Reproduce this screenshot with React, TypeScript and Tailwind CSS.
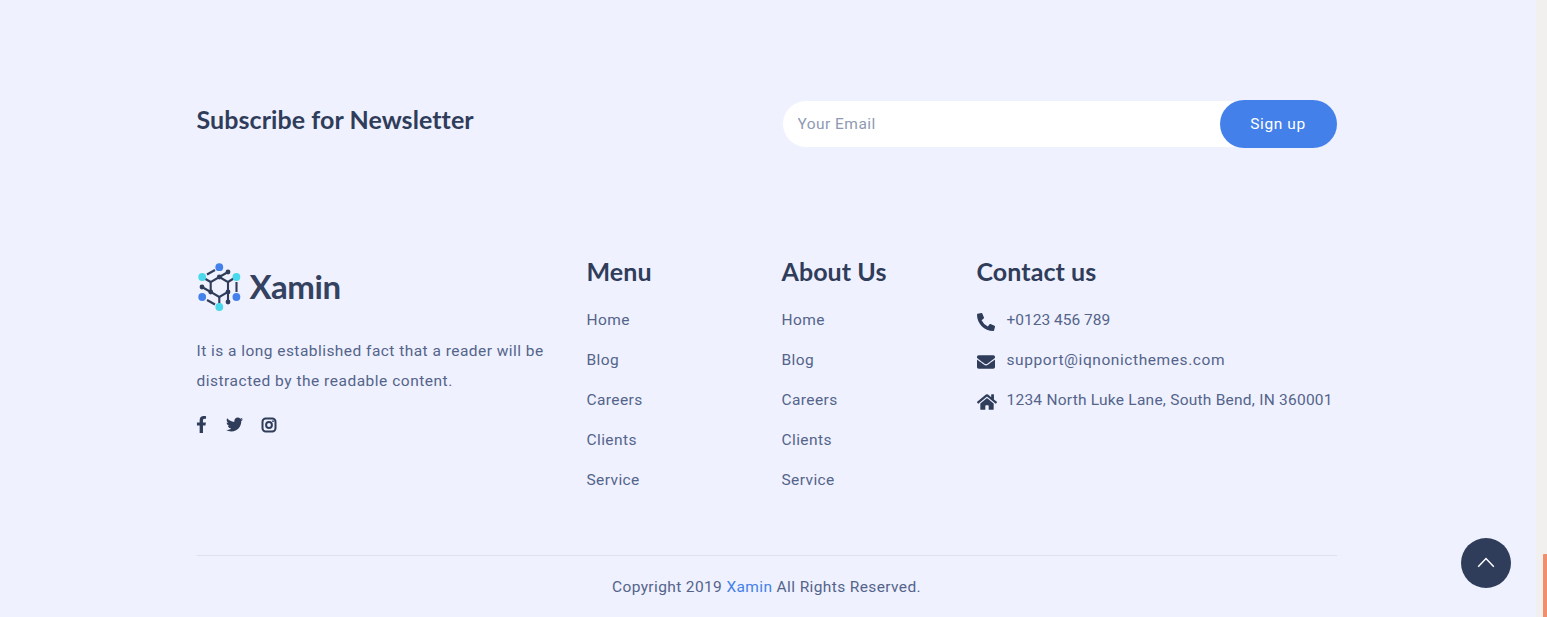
import React from "react";
import { FaFacebookF, FaTwitter, FaPhoneAlt, FaEnvelope, FaHome } from "react-icons/fa";

const links = ["Home", "Blog", "Careers", "Clients", "Service"];

function Logo() {
  return (
    <div className="-ml-px flex h-[50px] items-center">
      <svg width="46" height="50" viewBox="196 262 46 50" className="shrink-0">
        <g fill="none" stroke="#2f3d5b" strokeWidth="2.1">
          <path d="M219.3 277L228 282V292L219.3 297L210.7 292V282Z" />
          <path d="M219.3 277L228 272M202 287L210.7 292M228 292V302M228 282L236 277M210.7 282L202 277M219.3 297V307M207 274.5L215 270M236.5 282V292M207 300L215 304.5" />
        </g>
        <g fill="#2f3d5b">
          <circle cx="228" cy="272" r="2.4" />
          <circle cx="219.3" cy="277" r="2.4" />
          <circle cx="202" cy="287" r="2.4" />
          <circle cx="210.7" cy="292" r="2.4" />
          <circle cx="228" cy="292" r="2.4" />
          <circle cx="228" cy="302" r="2.4" />
        </g>
        <g fill="#4481eb">
          <circle cx="219.3" cy="267.2" r="3.9" />
          <circle cx="202.2" cy="297" r="3.9" />
          <circle cx="236.4" cy="297" r="3.9" />
        </g>
        <g fill="#4ad9ec">
          <circle cx="202.2" cy="277" r="3.9" />
          <circle cx="236.4" cy="277" r="3.9" />
          <circle cx="219.3" cy="307" r="3.9" />
        </g>
      </svg>
      <span className="mb-[2px] ml-[8px] font-['Lato'] text-[33px] leading-none font-bold tracking-[-0.4px] text-[#34425f]">Xamin</span>
    </div>
  );
}

function Heading({ children }: { children: React.ReactNode }) {
  return (
    <h4 className="-mt-px font-['Lato'] text-[25px] leading-[34px] font-bold tracking-[0.07px] text-[#2f3d5b] [font-variant-ligatures:none]">{children}</h4>
  );
}

function LinkColumn({ title }: { title: string }) {
  return (
    <nav className="w-[195px]">
      <Heading>{title}</Heading>
      <ul className="mt-[17px] tracking-[0.4px]">
        {links.map((l) => (
          <li key={l} className="h-10 leading-[30px]">
            <a href="#">{l}</a>
          </li>
        ))}
      </ul>
    </nav>
  );
}

function InstagramIcon() {
  return (
    <svg width="16" height="16" viewBox="0 0 16 16" fill="none" stroke="currentColor" strokeWidth="2" className="ml-[18px]">
      <rect x="1.5" y="1.5" width="13" height="13" rx="3.2" />
      <circle cx="8" cy="8" r="2.9" />
      <circle cx="12" cy="4.2" r="0.9" fill="currentColor" stroke="none" />
    </svg>
  );
}

export default function App() {
  return (
    <div className="flex h-[617px] w-[1547px] overflow-hidden bg-[#eff1fe] font-['Roboto',sans-serif] text-[15.5px] text-[#54648a]">
      <div className="flex w-[1536px] flex-col pl-[196.5px]">
        <section className="flex h-[255px] w-[1140px] justify-between pt-[100px]">
          <div className="mt-[3px]"><Heading>Subscribe for Newsletter</Heading></div>
          <form className="flex h-12 w-[554px] items-center">
            <input placeholder="Your Email" className="-mr-8 h-[46px] min-w-0 flex-1 rounded-l-full bg-white pl-[15px] tracking-[0.46px] outline-none placeholder:text-[#8e9ab3]" />
            <button type="button" className="relative h-12 w-[117px] rounded-full bg-[#4480ea] pt-px tracking-[0.6px] text-white">Sign up</button>
          </form>
        </section>
        <section className="flex h-[300px] w-[1140px]">
          <div className="w-[390px] pt-[7px]">
            <Logo />
            <p className="mt-[24px] leading-[30px] tracking-[0.46px]">
              It is a long established fact that a reader will be<br /><span className="tracking-[0.51px]">distracted by the readable content.</span>
            </p>
            <div className="mt-5 flex items-center text-[17px] text-[#2f3d5b]">
              <FaFacebookF className="-ml-1 mr-px" />
              <FaTwitter className="ml-[15px]" />
              <InstagramIcon />
            </div>
          </div>
          <LinkColumn title="Menu" />
          <LinkColumn title="About Us" />
          <div className="w-[360px]">
            <Heading>Contact us</Heading>
            <ul className="mt-[17px] leading-[30px] whitespace-nowrap">
              <li className="flex h-10 tracking-[0.01px]"><FaPhoneAlt className="mt-[8px] mr-[12px] size-[18px] text-[#2f3d5b]" />+0123 456 789</li>
              <li className="flex h-10 tracking-[0.58px]"><FaEnvelope className="mt-[8px] mr-[12px] size-[18px] text-[#2f3d5b]" />support@iqnonicthemes.com</li>
              <li className="flex h-10 tracking-[0.24px]"><FaHome className="mt-[7px] mr-[10px] size-[20px] text-[#2f3d5b]" />1234 North Luke Lane, South Bend, IN 360001</li>
            </ul>
          </div>
        </section>
        <footer className="h-[62px] w-[1140px] border-t border-[#dde1ec] pt-[16px] text-center leading-[30px] tracking-[0.38px]">
          Copyright 2019 <a href="#" className="text-[#4480ea]">Xamin</a> All Rights Reserved.
        </footer>
      </div>
      <div className="flex w-[11px] items-end justify-end bg-[#f1f0ee]">
        <div className="h-[63px] w-1 rounded-tl-[1px] bg-[#f08f6b]" />
      </div>
      <button type="button" aria-label="Back to top" className="fixed top-[538px] left-[1461px] flex size-[50px] items-center justify-center rounded-full bg-[#2f3d5b]">
        <svg width="18" height="12" viewBox="0 0 18 12" fill="none" stroke="white" strokeWidth="1.5"><path d="M1.2 9.8L9 1.5L16.8 9.8" /></svg>
      </button>
    </div>
  );
}
